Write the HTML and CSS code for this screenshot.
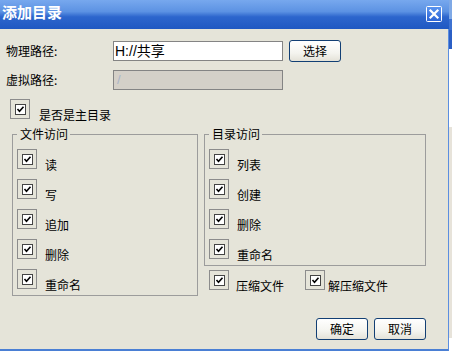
FILE: index.html
```html
<!DOCTYPE html>
<html lang="zh">
<head>
<meta charset="utf-8">
<title>添加目录</title>
<link rel="stylesheet" href="styles.css">
</head>
<body>
<div class="screen">
  <div class="dialog">
    <div class="titlebar">
      <span class="title">添加目录</span>
      <span class="close">
        <svg width="16" height="16" viewBox="0 0 16 16">
          <defs>
            <linearGradient id="cg" x1="0" y1="0" x2="0" y2="1">
              <stop offset="0" stop-color="#5b95f0"/>
              <stop offset="1" stop-color="#2a62d4"/>
            </linearGradient>
          </defs>
          <rect x="0.5" y="0.5" width="15" height="15" rx="1" fill="url(#cg)" stroke="#ffffff"/>
          <path d="M4.5 4.5 L11.5 11.5 M11.5 4.5 L4.5 11.5" stroke="#ffffff" stroke-width="2.2" stroke-linecap="square"/>
        </svg>
      </span>
    </div>
    <div class="body">
      <div class="row row-phys">
        <span class="lbl">物理路径:</span>
        <div class="input">H://共享</div>
        <button class="btn btn-pick">选择</button>
      </div>
      <div class="row row-virt">
        <span class="lbl">虚拟路径:</span>
        <div class="input input-disabled">/</div>
      </div>
      <div class="chk chk-main">
        <span class="box"><span class="inner"><svg width="9" height="9" viewBox="0 0 9 9"><path d="M1.5 4 L3.5 6.2 L7.5 1.8" fill="none" stroke="#000" stroke-width="1.6"/></svg></span></span>
        <span class="cl">是否是主目录</span>
      </div>
      <div class="groups">
        <fieldset class="fs fs-file">
          <legend>文件访问</legend>
          <div class="list">
            <div class="chk"><span class="box"><span class="inner"><svg width="9" height="9" viewBox="0 0 9 9"><path d="M1.5 4 L3.5 6.2 L7.5 1.8" fill="none" stroke="#000" stroke-width="1.6"/></svg></span></span><span class="cl">读</span></div>
            <div class="chk"><span class="box"><span class="inner"><svg width="9" height="9" viewBox="0 0 9 9"><path d="M1.5 4 L3.5 6.2 L7.5 1.8" fill="none" stroke="#000" stroke-width="1.6"/></svg></span></span><span class="cl">写</span></div>
            <div class="chk"><span class="box"><span class="inner"><svg width="9" height="9" viewBox="0 0 9 9"><path d="M1.5 4 L3.5 6.2 L7.5 1.8" fill="none" stroke="#000" stroke-width="1.6"/></svg></span></span><span class="cl">追加</span></div>
            <div class="chk"><span class="box"><span class="inner"><svg width="9" height="9" viewBox="0 0 9 9"><path d="M1.5 4 L3.5 6.2 L7.5 1.8" fill="none" stroke="#000" stroke-width="1.6"/></svg></span></span><span class="cl">删除</span></div>
            <div class="chk"><span class="box"><span class="inner"><svg width="9" height="9" viewBox="0 0 9 9"><path d="M1.5 4 L3.5 6.2 L7.5 1.8" fill="none" stroke="#000" stroke-width="1.6"/></svg></span></span><span class="cl">重命名</span></div>
          </div>
        </fieldset>
        <div class="rightcol">
          <fieldset class="fs fs-dir">
            <legend>目录访问</legend>
            <div class="list">
              <div class="chk"><span class="box"><span class="inner"><svg width="9" height="9" viewBox="0 0 9 9"><path d="M1.5 4 L3.5 6.2 L7.5 1.8" fill="none" stroke="#000" stroke-width="1.6"/></svg></span></span><span class="cl">列表</span></div>
              <div class="chk"><span class="box"><span class="inner"><svg width="9" height="9" viewBox="0 0 9 9"><path d="M1.5 4 L3.5 6.2 L7.5 1.8" fill="none" stroke="#000" stroke-width="1.6"/></svg></span></span><span class="cl">创建</span></div>
              <div class="chk"><span class="box"><span class="inner"><svg width="9" height="9" viewBox="0 0 9 9"><path d="M1.5 4 L3.5 6.2 L7.5 1.8" fill="none" stroke="#000" stroke-width="1.6"/></svg></span></span><span class="cl">删除</span></div>
              <div class="chk"><span class="box"><span class="inner"><svg width="9" height="9" viewBox="0 0 9 9"><path d="M1.5 4 L3.5 6.2 L7.5 1.8" fill="none" stroke="#000" stroke-width="1.6"/></svg></span></span><span class="cl">重命名</span></div>
            </div>
          </fieldset>
          <div class="zip-row">
            <div class="chk chk-zip"><span class="box"><span class="inner"><svg width="9" height="9" viewBox="0 0 9 9"><path d="M1.5 4 L3.5 6.2 L7.5 1.8" fill="none" stroke="#000" stroke-width="1.6"/></svg></span></span><span class="cl">压缩文件</span></div>
            <div class="chk chk-unzip"><span class="box"><span class="inner"><svg width="9" height="9" viewBox="0 0 9 9"><path d="M1.5 4 L3.5 6.2 L7.5 1.8" fill="none" stroke="#000" stroke-width="1.6"/></svg></span></span><span class="cl">解压缩文件</span></div>
          </div>
        </div>
      </div>
      <div class="actions">
        <button class="btn">确定</button>
        <button class="btn">取消</button>
      </div>
    </div>
  </div>
  <div class="strip"></div>
</div>
</body>
</html>
```

FILE: styles.css
```css
html, body {
  margin: 0;
  padding: 0;
  background: #ffffff;
}

body {
  font-family: "Noto Sans CJK SC", "Liberation Sans", sans-serif;
  font-size: 12px;
  color: #000;
}

.screen {
  display: flex;
  width: 452px;
  height: 352px;
  overflow: hidden;
}

.dialog {
  width: 449px;
  height: 351px;
  display: flex;
  flex-direction: column;
  flex: none;
}

.titlebar {
  height: 29px;
  flex: none;
  box-sizing: border-box;
  display: flex;
  justify-content: space-between;
  align-items: flex-start;
  padding: 3px 7px 0 2px;
  background: linear-gradient(to bottom, #77a8ee 0%, #5c92e3 40%, #2d66cd 58%, #1f58c2 100%);
}

.title {
  color: #ffffff;
  font-size: 15px;
  font-weight: bold;
  line-height: 18px;
  letter-spacing: 0;
}

.close {
  display: block;
  width: 16px;
  height: 16px;
  margin-top: 3px;
}

.close svg {
  display: block;
}

.body {
  flex: 1;
  background: #e5e4d9;
  border-right: 1px solid #5b8ee0;
  border-bottom: 2px solid #4a7fd4;
  padding: 11px 22px 0 6px;
  display: flex;
  flex-direction: column;
}

.row {
  display: flex;
  align-items: center;
}

.row-phys {
  height: 22px;
}

.row-virt {
  height: 20px;
  margin-top: 8px;
}

.lbl {
  width: 107px;
  line-height: 14px;
}

.input {
  width: 170px;
  height: 20px;
  box-sizing: border-box;
  border: 1px solid #848484;
  background: #ffffff;
  font-family: "Liberation Sans", "Noto Sans CJK SC", sans-serif;
  font-size: 14px;
  line-height: 18px;
  padding-left: 1px;
}

.input-disabled {
  background: #d4d0c8;
  color: #a9b4c8;
  font-size: 13px;
  padding-left: 3px;
}

.btn {
  width: 52px;
  height: 22px;
  box-sizing: border-box;
  border: 1px solid #123f74;
  border-radius: 3px;
  background: linear-gradient(to bottom, #ffffff 0%, #f4f4ef 60%, #e4e2d8 100%);
  font-family: "Noto Sans CJK SC", sans-serif;
  font-size: 12px;
  line-height: 14px;
  color: #000;
  padding: 0;
  margin: 0;
}

.btn-pick {
  margin-left: 6px;
}

.chk {
  display: flex;
  align-items: flex-start;
  height: 20px;
}

.box {
  width: 20px;
  height: 20px;
  box-sizing: border-box;
  border: 1px solid #8c8c8c;
  padding: 4px;
  flex: none;
  display: block;
}

.inner {
  display: flex;
  align-items: center;
  justify-content: center;
  width: 11px;
  height: 11px;
  box-sizing: border-box;
  border: 1px solid #444444;
  background: #ffffff;
}

.inner svg {
  display: block;
}

.cl {
  margin-left: 8px;
  padding-top: 9px;
  line-height: 13px;
  white-space: nowrap;
}

.chk-main {
  margin-top: 9px;
  margin-left: 4px;
}

.chk-main .cl {
  margin-left: 9px;
}

.groups {
  display: flex;
  align-items: flex-start;
  gap: 6px;
  margin-top: 9px;
  margin-left: 6px;
}

.fs {
  margin: 0;
  min-width: 0;
  box-sizing: border-box;
  border: 1px solid #9c9c9c;
  padding: 0 0 6px 4px;
}

.fs legend {
  padding: 0 2px 0 3px;
  font-size: 12px;
  line-height: 12px;
}

.fs-file {
  width: 188px;
}

.rightcol {
  width: 222px;
  display: flex;
  flex-direction: column;
}

.fs-dir {
  width: 222px;
}

.list {
  display: flex;
  flex-direction: column;
  gap: 10px;
  margin-top: 9px;
}

.zip-row {
  display: flex;
  margin-top: 4px;
  padding-left: 5px;
}

.chk-zip {
  width: 96px;
}

.chk-zip .cl {
  margin-left: 7px;
}

.chk-unzip .cl {
  margin-left: 3px;
}

.actions {
  display: flex;
  justify-content: flex-end;
  gap: 6px;
  margin-top: 22px;
}

.strip {
  width: 3px;
  height: 352px;
  flex: none;
  background: linear-gradient(to bottom,
    #7fa9e6 0px, #7fa9e6 19px,
    #3d72d1 19px, #3d72d1 30px,
    #2b5fc5 30px, #2b5fc5 49px,
    #ffffff 49px, #ffffff 127px,
    #e7e3da 127px, #e7e3da 338px,
    #ffffff 338px);
}
```
